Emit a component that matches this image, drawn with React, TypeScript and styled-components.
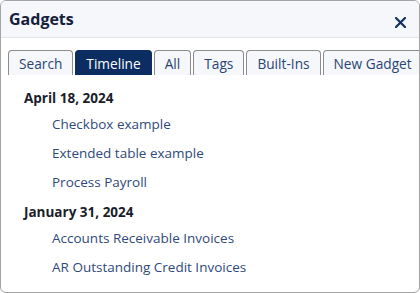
import React from "react";
import styled, { createGlobalStyle } from "styled-components";

const GlobalStyle = createGlobalStyle`
  html, body {
    margin: 0;
    padding: 0;
    background: #ffffff;
  }
  body {
    font-family: "Open Sans", "Noto Sans", sans-serif;
  }
`;

const Panel = styled.div`
  width: 420px;
  height: 293px;
  box-sizing: border-box;
  border: 1px solid #a3a3a3;
  border-radius: 6px;
  overflow: hidden;
  background: #ffffff;
  display: flex;
  flex-direction: column;
`;

const Header = styled.div`
  height: 37px;
  flex: none;
  box-sizing: border-box;
  background: #f5f7fa;
  border-bottom: 1px solid #e1e4e8;
  display: flex;
  align-items: center;
  justify-content: space-between;
  padding: 0 12px 0 8px;
`;

const Title = styled.h1`
  margin: 0;
  font-size: 16px;
  font-weight: 700;
  color: #14213d;
`;

const CloseButton = styled.button`
  border: none;
  background: none;
  padding: 0;
  width: 14px;
  height: 14px;
  margin-top: 6px;
  display: flex;
  align-items: center;
  justify-content: center;
  cursor: pointer;
`;

const Tabs = styled.div`
  display: flex;
  gap: 2px;
  padding: 12px 0 0 7px;
`;

const Tab = styled.button<{ $active?: boolean }>`
  height: 25px;
  box-sizing: border-box;
  padding: 0 10px;
  font-family: inherit;
  font-size: 13.7px;
  border: 1px solid ${(p) => (p.$active ? "#0b2d61" : "#8c8c8c")};
  border-bottom: none;
  border-radius: 4px 4px 0 0;
  background: ${(p) => (p.$active ? "#0b2d61" : "#f5f7fa")};
  color: ${(p) => (p.$active ? "#ffffff" : "#2a4573")};
  white-space: nowrap;
  cursor: pointer;
`;

const List = styled.div`
  padding: 11px 0 0 23px;
  display: flex;
  flex-direction: column;
  gap: 3px;
`;

const Group = styled.div`
  display: flex;
  flex-direction: column;
`;

const DateHeading = styled.div`
  font-size: 13.5px;
  font-weight: 700;
  color: #1a1d2b;
  height: 24px;
  line-height: 24px;
`;

const Item = styled.a`
  display: block;
  padding-left: 28px;
  height: 29px;
  line-height: 29px;
  font-size: 13.5px;
  color: #2f4a7a;
  text-decoration: none;
`;

const tabs = ["Search", "Timeline", "All", "Tags", "Built-Ins", "New Gadget"];

const groups = [
  {
    date: "April 18, 2024",
    items: ["Checkbox example", "Extended table example", "Process Payroll"],
  },
  {
    date: "January 31, 2024",
    items: ["Accounts Receivable Invoices", "AR Outstanding Credit Invoices"],
  },
];

export default function App() {
  return (
    <>
      <GlobalStyle />
      <Panel>
        <Header>
          <Title>Gadgets</Title>
          <CloseButton aria-label="Close">
            <svg width="11" height="11" viewBox="0 0 11 11">
              <path
                d="M1 1L10 10M10 1L1 10"
                stroke="#14305f"
                strokeWidth="2.2"
                strokeLinecap="round"
              />
            </svg>
          </CloseButton>
        </Header>
        <Tabs>
          {tabs.map((t) => (
            <Tab key={t} $active={t === "Timeline"}>
              {t}
            </Tab>
          ))}
        </Tabs>
        <List>
          {groups.map((g) => (
            <Group key={g.date}>
              <DateHeading>{g.date}</DateHeading>
              {g.items.map((i) => (
                <Item key={i} href="#">
                  {i}
                </Item>
              ))}
            </Group>
          ))}
        </List>
      </Panel>
    </>
  );
}
